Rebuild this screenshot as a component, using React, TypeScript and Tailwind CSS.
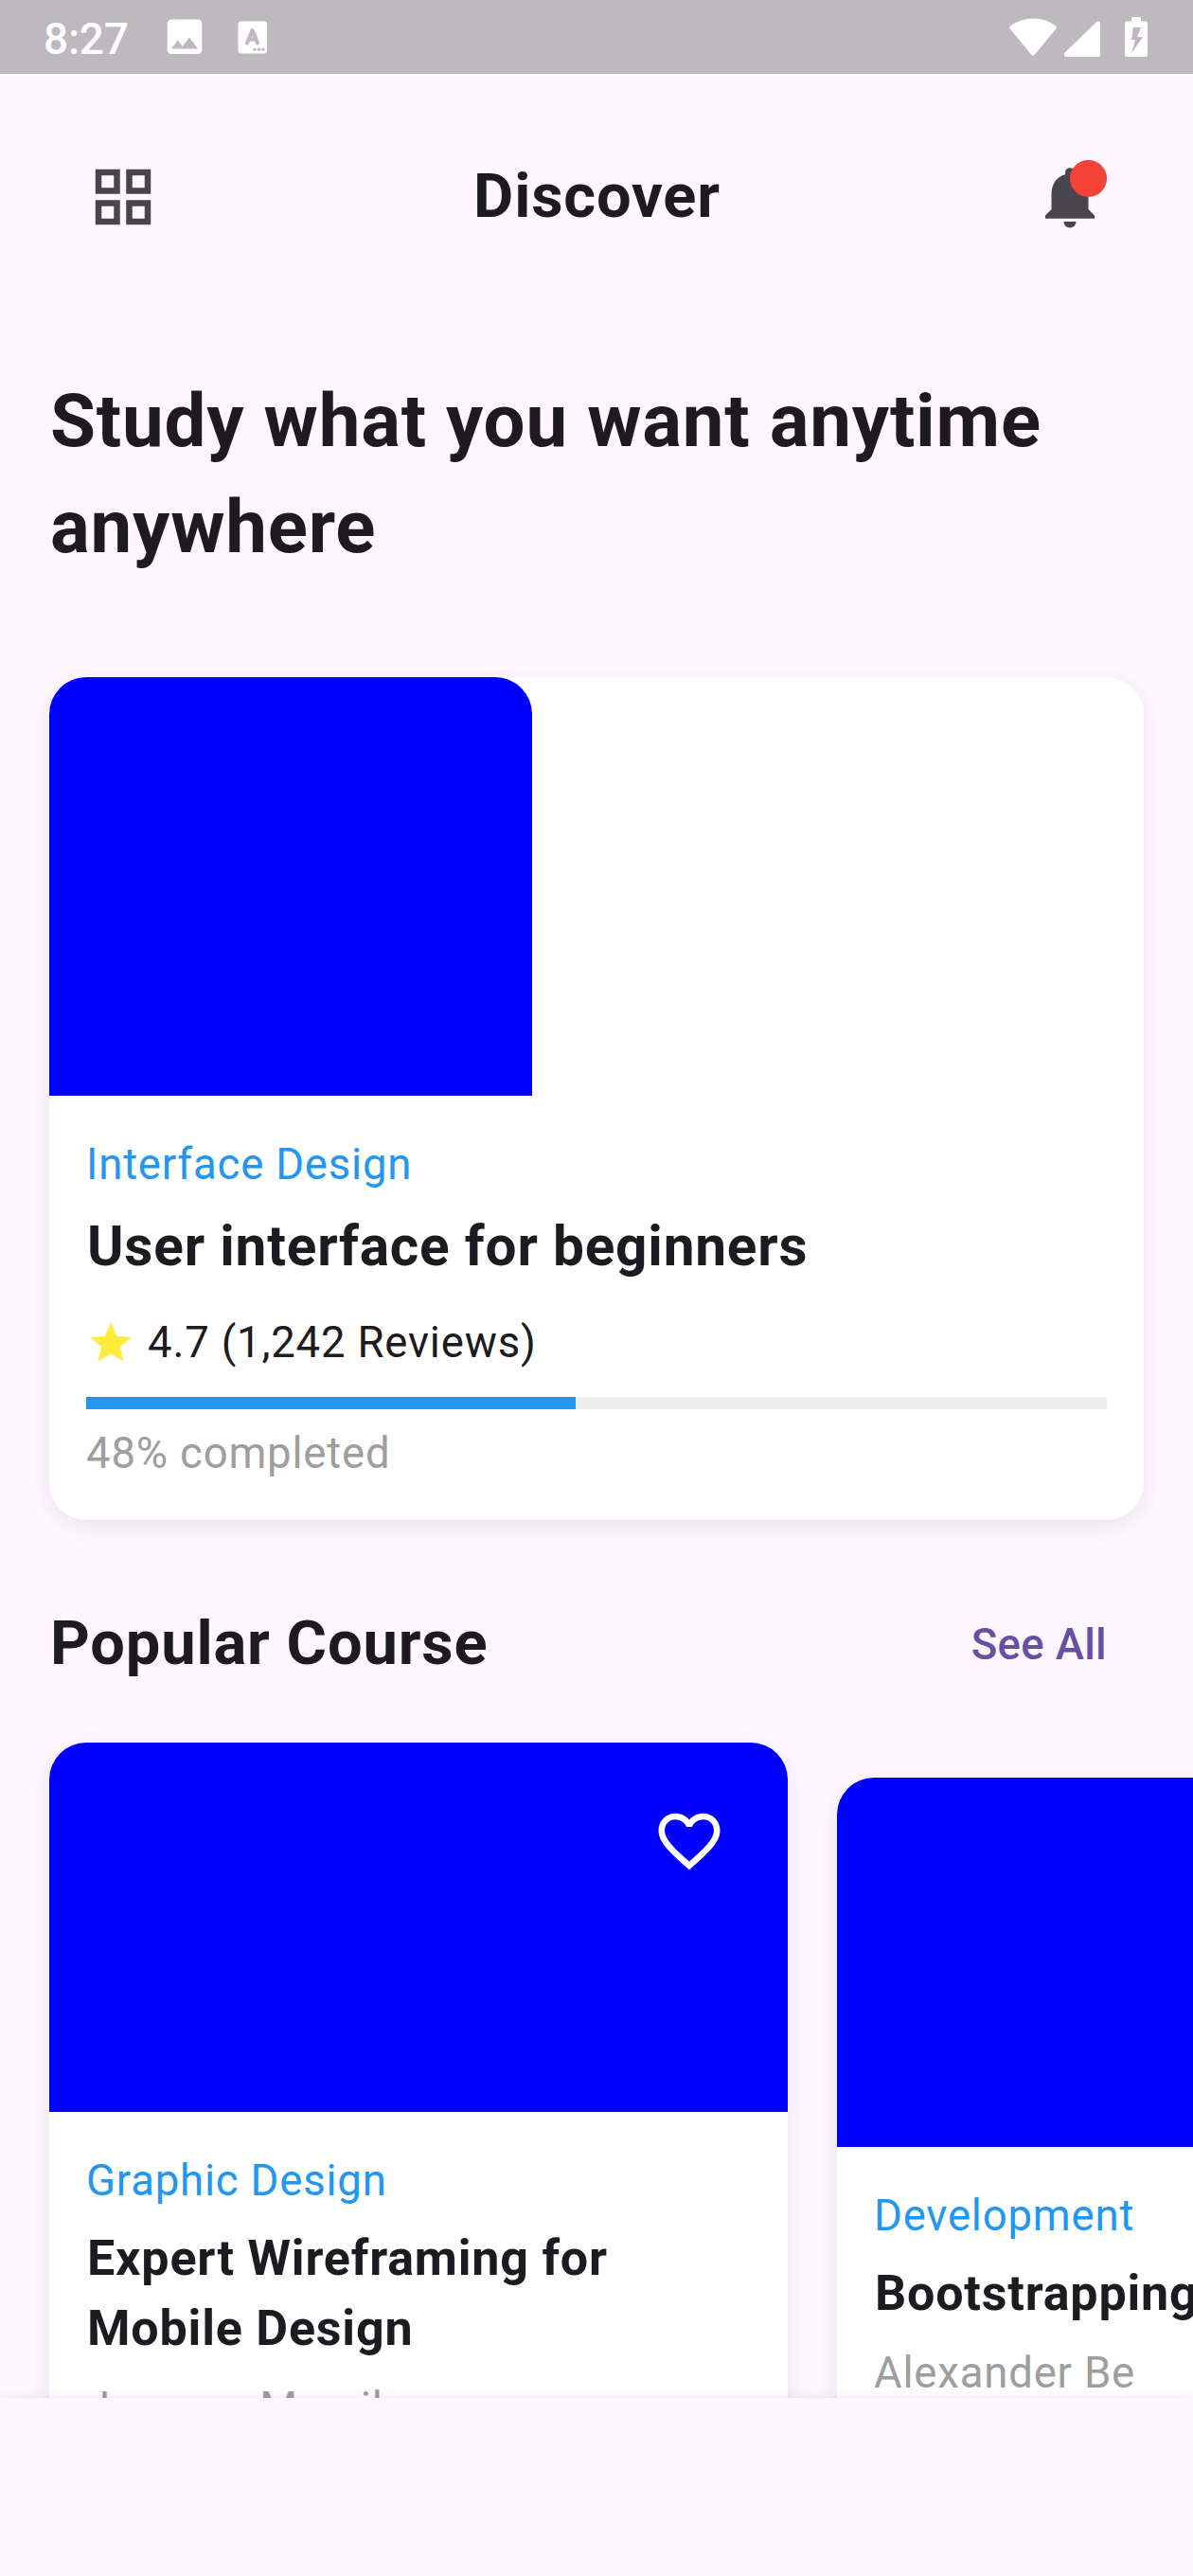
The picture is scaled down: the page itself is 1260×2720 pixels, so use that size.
import React from 'react';

function StatusBar() {
  return (
    <header className="flex h-[78px] shrink-0 items-center bg-[#beb8bf] pl-[46px] pr-[48px] text-white">
      <span className="mt-[3px] w-[91px] text-[46px] leading-none font-medium tracking-[-0.2px]">8:27</span>
      <svg className="ml-[39px] h-[38px] w-[38px]" viewBox="0 0 38 38" fill="currentColor">
        <path fillRule="evenodd" d="M5 0.5h28a4.3 4.3 0 0 1 4.3 4.3v28a4.3 4.3 0 0 1-4.3 4.3H5a4.3 4.3 0 0 1-4.3-4.3v-28A4.3 4.3 0 0 1 5 .5zM5 31.500h28L24 19.500l-7.300 9.500-5-6.500z" />
      </svg>
      <svg className="ml-[37px] h-[35px] w-[32px]" viewBox="0 0 32 35" fill="none">
        <rect x="0.500" y="0.500" width="30.500" height="34" rx="3" fill="currentColor" />
        <path d="M10 23.500 15.500 10 21 23.500M12 19.500h7" stroke="#beb8bf" strokeWidth="4" strokeLinecap="round" strokeLinejoin="round" />
        <g fill="#beb8bf">
          <circle cx="18" cy="30.300" r="1.700" />
          <circle cx="22.500" cy="30.300" r="1.700" />
          <circle cx="27" cy="30.300" r="1.700" />
        </g>
      </svg>
      <div className="ml-auto flex items-center">
        <svg className="h-[40px] w-[50px]" viewBox="0 0 50 40" fill="currentColor">
          <path d="M1 8.500C15-2.200 36-2.200 49 8.500q1.500 1.200.3 2.800L27 38.600q-2 2.200-4 0L.7 11.300Q-.5 9.700 1 8.500z" />
        </svg>
        <svg className="mt-[3px] ml-[8px] h-[38px] w-[38px]" viewBox="0 0 38 38" fill="currentColor">
          <path d="M34.500.7Q38-1 38 2.500V36q0 2-2 2H2Q0 38 0 36v-1q0-.8.700-1.500z" />
        </svg>
        <svg className="ml-[26px] h-[42px] w-[24px]" viewBox="0 0 24 42" fill="currentColor">
          <path fillRule="evenodd" d="M7 0h10v4.500h4.500Q24 4.500 24 7v32.500q0 2.500-2.500 2.500h-19Q0 42 0 39.500V7Q0 4.500 2.500 4.500H7zM8.700 11 7 24h4L7.300 38 19 21h-6l4-10z" />
        </svg>
      </div>
    </header>
  );
}

function TopBar() {
  return (
    <div className="flex items-center justify-between px-[91px] pt-[83px]">
      <svg className="h-[78px] w-[78px]" viewBox="0 0 24 24" fill="#49454f">
        <path fillRule="evenodd" d="M3 3v8h8V3H3zm6 6H5V5h4v4zm-6 4v8h8v-8H3zm6 6H5v-4h4v4zm4-16v8h8V3h-8zm6 6h-4V5h4v4zm-6 4v8h8v-8h-8zm6 6h-4v-4h4v4z" />
      </svg>
      <h1 className="pl-px text-[65px] leading-[93px] font-bold">Discover</h1>
      <div className="relative h-[78px] w-[78px]">
        <svg className="h-[78px] w-[78px]" viewBox="0 0 24 24" fill="#49454f">
          <path d="M12 22c1.100 0 2-.9 2-2h-4c0 1.100.89 2 2 2zm6-6v-5c0-3.070-1.640-5.640-4.500-6.320V4c0-.83-.67-1.500-1.500-1.500s-1.500.67-1.500 1.500v.68C7.630 5.360 6 7.920 6 11v5l-2 2v1h16v-1l-2-2z" />
        </svg>
        <span className="absolute top-0 right-0 h-[39px] w-[39px] rounded-full bg-[#f44336]" />
      </div>
    </div>
  );
}

function FeaturedCourse() {
  return (
    <article className="mx-[52px] h-[890px] rounded-[39px] bg-white shadow-[0_6px_26px_rgba(0,0,0,0.08)]">
      <div className="h-[442px] w-[510px] rounded-t-[39px] bg-[#0000ff]" />
      <div className="flex flex-col px-[39px] pt-[40px]">
        <p className="text-[45.5px] leading-[65px] text-[#2196f3]">Interface Design</p>
        <h3 className="mt-[12px] pl-px text-[58.5px] leading-[84px] font-bold">User interface for beginners</h3>
        <div className="mt-[27px] flex items-center gap-[13px]">
          <svg className="h-[52px] w-[52px]" viewBox="0 0 24 24" fill="#ffeb3b">
            <path d="M12 17.270 18.180 21l-1.640-7.030L22 9.240l-7.190-.61L12 2 9.190 8.630 2 9.240l5.460 4.730L5.820 21z" />
          </svg>
          <span className="text-[45.5px] leading-[65px]">4.7 (1,242 Reviews)</span>
        </div>
        <div className="mt-[25.4px] h-[13px] bg-[#eeeeee]">
          <div className="h-full w-[48%] bg-[#2196f3]" />
        </div>
        <p className="mt-[13.600px] text-[45.5px] leading-[65px] text-[#9e9e9e]">48% completed</p>
      </div>
    </article>
  );
}

type Course = { category: string; title: string; author: string };

function CourseCard({ course, favorite }: { course: Course; favorite?: boolean }) {
  return (
    <article className="w-[780px] shrink-0 rounded-[39px] bg-white pb-[38px] shadow-[0_6px_26px_rgba(0,0,0,0.08)]">
      <div className="flex h-[390px] justify-end rounded-t-[39px] bg-[#0000ff] pt-[65px] pr-[65px]">
        {favorite && (
          <svg className="h-[78px] w-[78px]" viewBox="0 0 24 24" fill="white">
            <path d="M16.500 3c-1.740 0-3.410.81-4.500 2.090C10.910 3.810 9.240 3 7.500 3 4.420 3 2 5.420 2 8.500c0 3.780 3.400 6.860 8.550 11.540L12 21.350l1.450-1.320C18.600 15.360 22 12.280 22 8.500 22 5.420 19.580 3 16.500 3zm-4.400 15.550-.1.100-.1-.1C7.140 14.240 4 11.390 4 8.500 4 6.500 5.500 5 7.500 5c1.540 0 3.040.99 3.570 2.360h1.870C13.460 5.990 14.960 5 16.500 5c2 0 3.500 1.500 3.500 3.500 0 2.890-3.140 5.740-7.900 10.050z" />
          </svg>
        )}
      </div>
      <div className="px-[39px] pt-[40px]">
        <p className="text-[45.5px] leading-[65px] text-[#2196f3]">{course.category}</p>
        <h3 className="mt-[13px] pl-px text-[52px] leading-[74.4px] font-bold">{course.title}</h3>
        <p className="mt-[13px] text-[45.5px] leading-[65px] whitespace-pre text-[#9e9e9e]">{course.author}</p>
      </div>
    </article>
  );
}

export default function App() {
  return (
    <div className="flex h-[2720px] w-[1260px] flex-col overflow-hidden bg-[#fef7ff] font-['Roboto',sans-serif] tracking-[0.8125px] text-[#1d1b20]">
      <StatusBar />
      <main className="min-h-0 flex-1 overflow-hidden">
        <TopBar />
        <h2 className="mx-[52px] mt-[135px] mb-[103px] pl-px text-[78px] leading-[111.5px] font-bold">
          Study what you want anytime anywhere
        </h2>
        <FeaturedCourse />
        <div className="mt-[84px] flex items-center justify-between pr-[91px] pl-[53px]">
          <h2 className="text-[65px] leading-[93px] font-bold">Popular Course</h2>
          <span className="pt-[2px] text-[45.5px] leading-[65px] font-medium tracking-[0.325px] text-[#6750a4]">See All</span>
        </div>
        <section className="mt-[58px] flex items-center gap-[52px] pl-[52px]">
          <CourseCard favorite course={{ category: 'Graphic Design', title: 'Expert Wireframing for Mobile Design', author: 'Jerome  Marcil' }} />
          <CourseCard course={{ category: 'Development', title: 'Bootstrapping', author: 'Alexander Be' }} />
        </section>
      </main>
      <nav className="relative h-[188px] shrink-0 bg-[#fef7ff] shadow-[0_0_12px_rgba(0,0,0,0.09)]" />
    </div>
  );
}
